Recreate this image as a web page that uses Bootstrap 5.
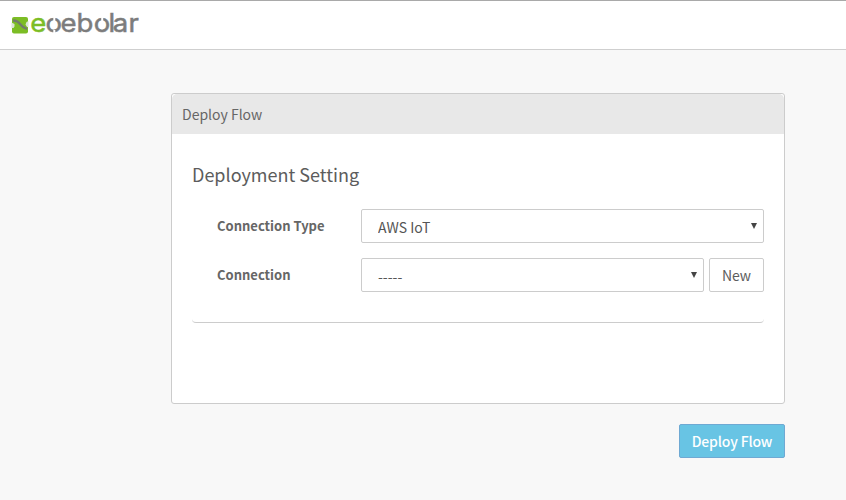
<!DOCTYPE html>
<html lang="en">
<head>
<meta charset="utf-8">
<meta name="viewport" content="width=device-width, initial-scale=1">
<title>Deploy Flow</title>
<link href="https://cdn.jsdelivr.net/npm/bootstrap@5.3.0/dist/css/bootstrap.min.css" rel="stylesheet">
<style>
body{background:#f8f8f8;color:#5c5c5c;font:14px/20px "Noto Sans CJK SC",sans-serif;min-height:500px;overflow:hidden}
.topbar{height:50px;background:#fff;border-top:1px solid #a9a9a9;border-bottom:1px solid #cfcfcf;padding:0 0 0 10px}
.deploy{width:614px;margin:43px 0 0 171px}
.panel{height:311px;border:1px solid #ccc;border-radius:3px;background:#fff}
.panel-head{height:40px;background:#e8e8e8;border:0;padding:10px 10px;color:#666}
.panel-main{padding:27px 20px 0}
.title{font-size:18px;line-height:26px;font-weight:400;margin:0 0 22px}
.settings{height:114px;border-bottom:1px solid #ccc;border-radius:0 0 4px 4px}
.field{height:34px;margin-bottom:15px}
.field-label{width:169px;padding-left:25px;font-weight:700;font-size:13px;color:#666}
.picker{height:34px;border:1px solid #ccc;border-radius:2px;padding:2px 24px 1px 16px;font-size:14px;line-height:28px;color:#555;background-color:#fff;background-image:url("data:image/svg+xml,%3Csvg xmlns='http://www.w3.org/2000/svg' viewBox='0 0 6 6'%3E%3Cpath fill='%23444' d='M0 0h6L3 6z'/%3E%3C/svg%3E");background-size:6px 6px;background-position:right 6px top 13px}
.action{height:34px;border-radius:2px;padding:0;font-size:14px;line-height:32px}
.new{width:55px;margin-left:5px;border-color:#ccc;background:#fff;color:#5c5c5c}
.submit{width:106px;background:#68c4e4;border-color:#6fa9d3;color:#fff;font-weight:500;letter-spacing:-.15px;margin-top:20px}
</style>
<script src="https://cdn.jsdelivr.net/npm/bootstrap@5.3.0/dist/js/bootstrap.bundle.min.js"></script>
</head>
<body>
<header class="topbar d-flex align-items-start">
<svg width="132" height="44" viewBox="10 1 132 44" role="img" aria-label="eoebolar">
<rect x="12" y="17" width="16" height="16.500" rx="2" fill="#7cbd25"/>
<path d="M11.500 22.500l3 1.500v2.500l-1 1.500h-2zM28.500 21l-2 1-1 2.500 1.500 2.500h1.500z" fill="#dce6d5"/>
<path d="M13 20.500q4.500 0 7 3.500t7 5" fill="none" stroke="#737c6c" stroke-width="2.300"/>
<text transform="scale(1.080 1)" y="32.500" x="27.900 42.200 56.100 70.900 86.700 100.400 104.400 118.900" font-family="Inter, sans-serif" font-size="25.500" fill="#7c7c7c" stroke="#7c7c7c" stroke-width=".5"><tspan fill="#7cbd25" stroke="#7cbd25">e</tspan>oebolar</text>
<path d="M54.300 30v4M54.300 17v4M102.200 17v4" stroke="#fff" stroke-width="2"/>
</svg>
</header>
<main class="deploy">
<section class="panel card">
<div class="panel-head card-header">Deploy Flow</div>
<div class="panel-main card-body">
<h1 class="title">Deployment Setting</h1>
<form class="settings">
<div class="field d-flex align-items-center">
<label class="field-label flex-shrink-0" for="type">Connection Type</label>
<select id="type" class="picker form-select"><option>AWS IoT</option></select>
</div>
<div class="field d-flex align-items-center">
<label class="field-label flex-shrink-0" for="connection">Connection</label>
<select id="connection" class="picker form-select"><option>-----</option></select>
<button type="button" class="action new btn flex-shrink-0">New</button>
</div>
</form>
</div>
</section>
<div class="d-flex justify-content-end"><button type="button" class="action submit btn">Deploy Flow</button></div>
</main>
</body>
</html>
